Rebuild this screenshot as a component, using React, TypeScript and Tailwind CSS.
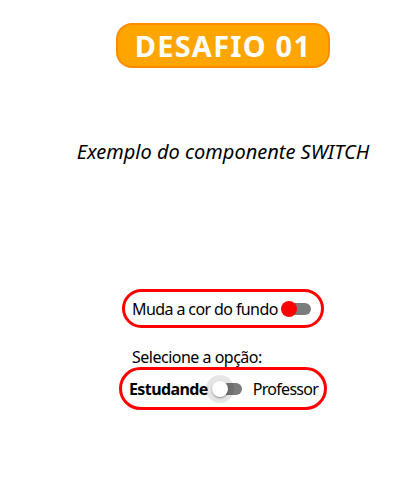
import React from "react";

function Toggle({ thumb, halo }: { thumb: string; halo?: boolean }) {
  return (
    <div className="relative h-[12px] w-[29px] shrink-0">
      <div className="absolute inset-0 rounded-full bg-[#7b7b7b]" />
      {halo && (
        <div className="absolute left-[-7px] top-[-8px] h-[28px] w-[28px] rounded-full bg-[#000]/10" />
      )}
      <div
        className={`absolute left-[-1px] top-[-2px] h-[16px] w-[16px] rounded-full ${thumb}`}
      />
    </div>
  );
}

export default function App() {
  return (
    <div
      className="flex min-h-[478px] w-[412px] flex-col items-center bg-white pl-[34px] pt-[23px] text-black"
      style={{ fontFamily: '"Noto Sans", "Open Sans", sans-serif' }}
    >
      {/* Title */}
      <div className="flex h-[45px] w-[214px] items-center justify-center rounded-[16px] border-2 border-[#ff8c00] bg-[#ffa500]">
        <span className="whitespace-nowrap text-[29px] font-bold leading-none tracking-[1.2px] text-white">
          DESAFIO 01
        </span>
      </div>

      <p className="mt-[70px] whitespace-nowrap text-[20px] italic leading-[28px]">
        Exemplo do componente SWITCH
      </p>

      {/* Switch 1 */}
      <div className="mt-[123px] flex h-[39px] w-[202px] shrink-0 items-center rounded-full border-[3px] border-[#ff0000] pl-[7px]">
        <span className="whitespace-nowrap text-[16px] leading-none tracking-[-0.6px]">
          Muda a cor do fundo
        </span>
        <div className="ml-[4px]">
          <Toggle thumb="bg-[#ff0000]" />
        </div>
      </div>

      <p className="mt-[19px] w-[190px] whitespace-nowrap pl-[4px] text-[16px] leading-[20px] tracking-[-0.5px]">
        Selecione a opção:
      </p>

      {/* Switch 2 */}
      <div className="flex h-[43px] w-[208px] shrink-0 items-center rounded-full border-[3px] border-[#ff0000] pl-[7px]">
        <span className="whitespace-nowrap text-[16px] font-bold leading-none tracking-[-0.6px]">
          Estudande
        </span>
        <div className="ml-[5px]">
          <Toggle thumb="bg-white shadow-[0_1px_2px_rgba(0,0,0,0.4)]" halo />
        </div>
        <span className="ml-[11px] whitespace-nowrap text-[16px] leading-none tracking-[-0.7px]">
          Professor
        </span>
      </div>
    </div>
  );
}
